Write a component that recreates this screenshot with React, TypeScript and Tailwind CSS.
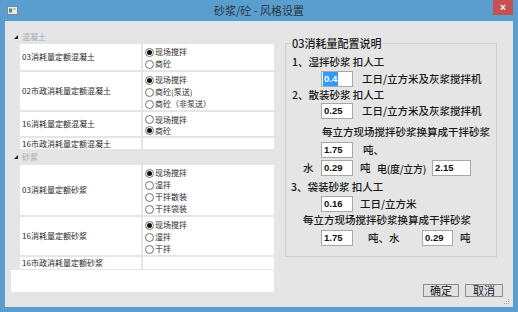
import React from "react";

type Row = { label: string; opts: string[]; sel?: number; h: number };

const sections: { title: string; h: number; rows: Row[] }[] = [
  {
    title: "混凝土",
    h: 14,
    rows: [
      { label: "03消耗量定额混凝土", opts: ["现场搅拌", "商砼"], sel: 0, h: 26 },
      { label: "02市政消耗量定额混凝土", opts: ["现场搅拌", "商砼(泵送)", "商砼（非泵送）"], sel: 0, h: 38 },
      { label: "16消耗量定额混凝土", opts: ["现场搅拌", "商砼"], sel: 1, h: 24 },
      { label: "16市政消耗量定额混凝土", opts: [], h: 11 },
    ],
  },
  {
    title: "砂浆",
    h: 16,
    rows: [
      { label: "03消耗量定额砂浆", opts: ["现场搅拌", "湿拌", "干拌散装", "干拌袋装"], sel: 0, h: 50 },
      { label: "16消耗量定额砂浆", opts: ["现场搅拌", "湿拌", "干拌"], sel: 0, h: 38 },
      { label: "16市政消耗量定额砂浆", opts: [], h: 12 },
    ],
  },
];

function Radio({ checked }: { checked: boolean }) {
  return (
    <span className="w-[9px] h-[9px] rounded-full border border-[#707070] bg-white flex items-center justify-center shrink-0">
      {checked && <span className="w-[5px] h-[5px] rounded-full bg-[#111]" />}
    </span>
  );
}

function Box({ v, w, sel }: { v: string; w: number; sel?: boolean }) {
  return (
    <div
      className="h-[16px] border border-[#a8a8a8] bg-white flex items-center pl-[1px] shrink-0 font-['Liberation_Sans',sans-serif] text-[9.5px] font-bold text-[#111]"
      style={{ width: w }}
    >
      {sel ? (
        <span className="bg-[#3399ff] text-white h-[14px] leading-[14px] px-[1px]">{v}</span>
      ) : (
        <span className="pl-[1px]">{v}</span>
      )}
    </div>
  );
}

export default function App() {
  return (
    <div className="w-[518px] h-[312px] bg-[#5a9ed0] flex flex-col overflow-hidden font-['Noto_Sans_CJK_SC',sans-serif]">
      {/* title bar */}
      <div className="h-[21px] grid grid-cols-[1fr_auto_1fr] items-center shrink-0">
        <div className="pl-[7px] flex items-center">
          <svg width="11" height="9" viewBox="0 0 11 9">
            <rect x="0.5" y="0.5" width="10" height="8" fill="#e8e8e8" stroke="#7d8a94" />
            <rect x="2" y="2.5" width="3" height="4" fill="#3f9a6a" />
            <rect x="6" y="2.5" width="3" height="1" fill="#9aa4ad" />
          </svg>
        </div>
        <div className="text-[11px] leading-none text-[#2b3540] whitespace-nowrap">砂浆/砼 - 风格设置</div>
        <div className="flex justify-end self-start pr-[5px]">
          <div className="w-[20px] h-[15px] bg-[#c75050] flex items-center justify-center text-white text-[10px] font-bold leading-none font-['Liberation_Sans',sans-serif]">
            ×
          </div>
        </div>
      </div>

      {/* client */}
      <div className="mx-[5px] mb-[5px] flex-1 bg-[#e5e5e5] relative flex">
        {/* left panel */}
        <div className="ml-[6px] mt-[9px] w-[263px] h-[262px] flex flex-col text-[8px] text-[#2a2a2a] whitespace-nowrap">
          {sections.map((s) => (
            <React.Fragment key={s.title}>
              <div className="flex items-center shrink-0" style={{ height: s.h }}>
                <svg width="4" height="4" viewBox="0 0 4 4" className="ml-[3px]">
                  <polygon points="4,0 4,4 0,4" fill="#222" />
                </svg>
                <span className="ml-[4px] text-[#a3acb9] leading-none">{s.title}</span>
              </div>
              {s.rows.map((r, i) => (
                <div
                  key={r.label}
                  className={`ml-[9px] flex gap-[2px] shrink-0 ${i < s.rows.length - 1 ? "mb-[2px]" : ""}`}
                  style={{ height: r.h }}
                >
                  <div className="w-[121px] bg-white flex items-center pl-[2px] leading-none">{r.label}</div>
                  <div className="flex-1 bg-white flex flex-col pt-[2px]">
                    {r.opts.map((o, j) => (
                      <div key={o} className="h-[12px] flex items-center gap-[1px] pl-[2px] leading-none">
                        <Radio checked={j === r.sel} />
                        <span>{o}</span>
                      </div>
                    ))}
                  </div>
                </div>
              ))}
            </React.Fragment>
          ))}
          <div className="mt-[1px] flex-1 bg-white" />
        </div>

        {/* right column */}
        <div className="ml-[11px] mt-[9px] w-[218px] flex flex-col text-[10.5px] font-medium text-[#1a1a1a] whitespace-nowrap">
          <div className="mt-[13px] w-[212px] h-[214px] border border-[#cfcfcf] relative flex flex-col">
            <span className="absolute left-[5px] -top-[8px] px-[1px] bg-[#e5e5e5] text-[11px] leading-[14px]">
              03消耗量配置说明
            </span>
            <div className="mt-[11px] h-[14px] leading-[14px] ml-[6px]">1、湿拌砂浆 扣人工</div>
            <div className="mt-[2px] h-[16px] flex items-center">
              <div className="ml-[35px]"><Box v="0.4" w={32} sel /></div>
              <span className="ml-[9px]">工日/立方米及灰浆搅拌机</span>
            </div>
            <div className="mt-[1px] h-[14px] leading-[14px] ml-[6px]">2、散装砂浆 扣人工</div>
            <div className="mt-[1px] h-[16px] flex items-center">
              <div className="ml-[35px]"><Box v="0.25" w={32} /></div>
              <span className="ml-[9px]">工日/立方米及灰浆搅拌机</span>
            </div>
            <div className="mt-[6px] h-[14px] leading-[14px] ml-[36px]">每立方现场搅拌砂浆换算成干拌砂浆</div>
            <div className="mt-[3px] h-[16px] flex items-center">
              <div className="ml-[35px]"><Box v="1.75" w={32} /></div>
              <span className="ml-[10px]">吨、</span>
            </div>
            <div className="mt-[2px] h-[16px] flex items-center">
              <span className="ml-[17px] w-[18px] shrink-0">水</span>
              <Box v="0.29" w={32} />
              <span className="ml-[7px] w-[17px] shrink-0">吨</span>
              <span className="w-[55px] shrink-0 text-[10px] tracking-[-0.3px]">电(度/立方)</span>
              <Box v="2.15" w={39} />
            </div>
            <div className="mt-[4px] h-[14px] leading-[14px] ml-[5px]">3、袋装砂浆 扣人工</div>
            <div className="mt-[2px] h-[16px] flex items-center">
              <div className="ml-[35px]"><Box v="0.16" w={32} /></div>
              <span className="ml-[7px]">工日/立方米</span>
            </div>
            <div className="mt-[1px] h-[14px] leading-[14px] ml-[17px]">每立方现场搅拌砂浆换算成干拌砂浆</div>
            <div className="mt-[3px] h-[16px] flex items-center">
              <div className="ml-[35px]"><Box v="1.75" w={32} /></div>
              <span className="ml-[15px] w-[54px] shrink-0">吨、水</span>
              <Box v="0.29" w={31} />
              <span className="ml-[7px]">吨</span>
            </div>
          </div>
          <div className="mt-[27px] flex justify-end gap-[6px] text-[11px] font-normal">
            <div className="w-[36px] h-[13px] border border-[#8e8e8e] bg-[#e1e1e1] flex items-center justify-center leading-none">确定</div>
            <div className="w-[38px] h-[13px] border border-[#8e8e8e] bg-[#e1e1e1] flex items-center justify-center leading-none">取消</div>
          </div>
        </div>

        {/* resize grip */}
        <svg width="6" height="6" viewBox="0 0 6 6" className="absolute right-[3px] bottom-[2px]">
          <rect x="4" y="0" width="1" height="1" fill="#a0a0a0" />
          <rect x="2" y="2" width="1" height="1" fill="#a0a0a0" />
          <rect x="4" y="2" width="1" height="1" fill="#a0a0a0" />
          <rect x="0" y="4" width="1" height="1" fill="#a0a0a0" />
          <rect x="2" y="4" width="1" height="1" fill="#a0a0a0" />
          <rect x="4" y="4" width="1" height="1" fill="#a0a0a0" />
        </svg>
      </div>
    </div>
  );
}
